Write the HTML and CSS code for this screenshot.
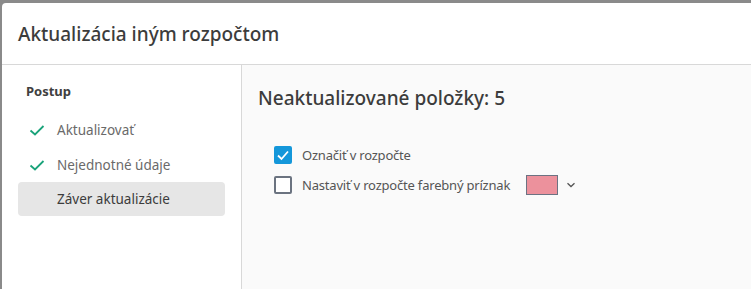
FILE: index.html
```html
<!DOCTYPE html>
<html lang="sk">
<head>
<meta charset="utf-8">
<link rel="stylesheet" href="styles.css">
</head>
<body>
<div class="backdrop">
  <div class="dialog">
    <header class="dlg-header">
      <h1 class="dlg-title">Aktualizácia iným rozpočtom</h1>
    </header>
    <div class="dlg-body">
      <nav class="sidebar">
        <div class="side-title">Postup</div>
        <ul class="steps">
          <li class="step done">
            <svg class="check" viewBox="0 0 16 16" width="16" height="16"><path d="M1.5 8.5 L6 12.5 L14.5 4" fill="none" stroke="#1aa37a" stroke-width="1.8"/></svg>
            <span>Aktualizovať</span>
          </li>
          <li class="step done">
            <svg class="check" viewBox="0 0 16 16" width="16" height="16"><path d="M1.5 8.5 L6 12.5 L14.5 4" fill="none" stroke="#1aa37a" stroke-width="1.8"/></svg>
            <span>Nejednotné údaje</span>
          </li>
          <li class="step active">
            <span class="check-space"></span>
            <span>Záver aktualizácie</span>
          </li>
        </ul>
      </nav>
      <main class="content">
        <h2 class="content-title">Neaktualizované položky: 5</h2>
        <div class="options">
          <label class="opt">
            <span class="cb checked">
              <svg viewBox="0 0 18 18" width="18" height="18"><path d="M4 9.5 L7.5 13 L14 5.5" fill="none" stroke="#fff" stroke-width="1.8"/></svg>
            </span>
            <span class="opt-text">Označiť v rozpočte</span>
          </label>
          <label class="opt">
            <span class="cb"></span>
            <span class="opt-text">Nastaviť v rozpočte farebný príznak</span>
            <span class="swatch"></span>
            <svg class="chev" viewBox="0 0 10 6" width="10" height="6"><path d="M1.5 1.2 L5 4.5 L8.5 1.2" fill="none" stroke="#555" stroke-width="1.3"/></svg>
          </label>
        </div>
      </main>
    </div>
  </div>
</div>
</body>
</html>
```

FILE: styles.css
```css
* { box-sizing: border-box; }
html, body { margin: 0; padding: 0; }
body {
  width: 751px;
  height: 289px;
  overflow: hidden;
  font-family: "Noto Sans", "Open Sans", sans-serif;
  background: #8a8a8a;
}
.backdrop {
  padding: 3px 0 0 2px;
  height: 289px;
}
.dialog {
  background: #fff;
  border-top-left-radius: 4px;
  height: 100%;
  display: flex;
  flex-direction: column;
}
.dlg-header {
  height: 62px;
  border-bottom: 1px solid #d8d8d8;
  display: flex;
  align-items: center;
  padding-left: 16px;
}
.dlg-title {
  margin: 0;
  font-size: 19px;
  font-weight: 500;
  color: #3c3c3c;
  letter-spacing: 0;
}
.dlg-body {
  flex: 1;
  display: flex;
}
.sidebar {
  width: 240px;
  border-right: 1px solid #d8d8d8;
  padding: 16px 16px 0 16px;
  background: #fff;
}
.side-title {
  font-size: 13px;
  font-weight: 700;
  color: #404040;
  padding-left: 8px;
  height: 20px;
  line-height: 20px;
}
.steps {
  list-style: none;
  margin: 12px 0 0 0;
  padding: 0;
}
.step {
  height: 34px;
  margin-bottom: 0.5px;
  display: flex;
  align-items: center;
  font-size: 13.5px;
  color: #6a6a6a;
  padding-left: 11px;
  border-radius: 4px;
}
.check { margin-right: 12px; }
.check-space { width: 28px; }
.step.active {
  background: #e6e6e6;
  color: #3c3c3c;
}
.content {
  flex: 1;
  background: #fafafa;
  padding: 21px 16px;
}
.content-title {
  margin: 0;
  font-size: 19px;
  font-weight: 500;
  color: #3c3c3c;
  height: 24px;
  line-height: 24px;
}
.options {
  margin-top: 36px;
  padding-left: 16px;
  display: flex;
  flex-direction: column;
  gap: 12px;
}
.opt {
  display: flex;
  align-items: center;
  height: 18px;
  font-size: 13px;
  color: #555;
}
.opt-text { letter-spacing: -0.2px; }
.cb {
  width: 18px;
  height: 18px;
  border: 2px solid #6b7380;
  border-radius: 2px;
  margin-right: 10px;
  display: flex;
  align-items: center;
  justify-content: center;
  background: #fff;
}
.cb.checked {
  background: #1497da;
  border-color: #1497da;
}
.cb.checked svg { flex: none; }
.swatch {
  width: 32px;
  height: 20px;
  background: #ec919c;
  border: 1px solid #6c7282;
  margin-left: 16px;
}
.chev { margin-left: 8px; }
```
